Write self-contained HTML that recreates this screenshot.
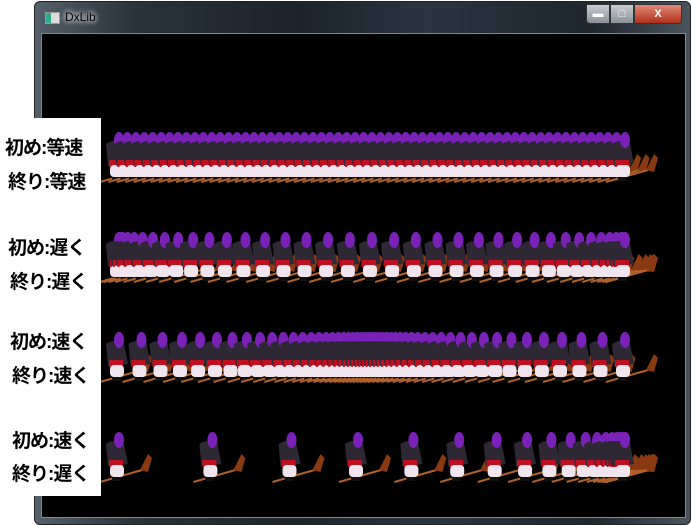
<!DOCTYPE html>
<html><head><meta charset="utf-8"><style>
body{margin:0;width:692px;height:525px;background:#fff;position:relative;overflow:hidden;font-family:"Liberation Sans","Noto Sans CJK JP",sans-serif}
#win{position:absolute;left:34px;top:1px;width:655px;height:522px;border-radius:6px;background:linear-gradient(90deg,#55606a,#2a323a 15%,#1c232b 40%,#2b3540 60%,#1e262e 85%,#4a545e);border:1px solid #222}
#title{position:absolute;left:30px;top:8px;font-size:12px;color:#000;text-shadow:0 0 6px #fff,0 0 6px #fff}
#ico{position:absolute;left:10px;top:10px;width:13px;height:10px;background:linear-gradient(90deg,#3a8 40%,#ddd 40%);border:1px solid #999}
#client{position:absolute;left:6px;top:31px;width:643px;height:483px;background:#000;border:1px solid #888}
.btn{position:absolute;top:2px;height:18px;border:1px solid #333;background:linear-gradient(#c8ccd2,#8a9098);color:#fff;font-size:11px;text-align:center;line-height:18px;font-weight:bold}
#panel{position:absolute;left:0;top:118px;width:101px;height:378px;background:#fff}
.t{position:absolute;font-size:19px;font-weight:bold;color:#000;white-space:nowrap;letter-spacing:-1px}
svg{position:absolute;left:0;top:0}
</style></head><body>
<div id="win">
<div id="ico"></div><div id="title">DxLib</div>
<div class="btn" style="left:551px;width:22px;border-radius:0 0 0 4px">▬</div>
<div class="btn" style="left:575px;width:22px">□</div>
<div class="btn" style="left:599px;width:46px;background:linear-gradient(#e08a78,#b03018);border-radius:0 0 4px 0">X</div>
<div id="client"></div>
</div>
<svg id="s" width="692" height="525">
<defs><g id="sp">
<line x1="-2" y1="52" x2="40" y2="40" stroke="#b0602a" stroke-width="2"/>
<path d="M38 40 l8 -16 l4 4 l-4 14 z" fill="#8a3a10"/>
<path d="M4 14 q8 -6 18 0 l4 20 l-20 2 z" fill="#2e2834"/>
<ellipse cx="17" cy="10" rx="5" ry="8" fill="#7a22b8"/>
<rect x="7" y="30" width="14" height="7" fill="#c01020"/>
<rect x="8" y="35" width="14" height="12" rx="4" fill="#f0e4ee"/>
<rect x="10" y="47" width="9" height="4" fill="#111"/>
</g></defs><g id="g"></g></svg>
<div id="panel">
<div class="t" style="left:5px;top:15px">初め:等速</div>
<div class="t" style="left:8px;top:49px">終り:等速</div>
<div class="t" style="left:8px;top:115px">初め:遅く</div>
<div class="t" style="left:10px;top:149px">終り:遅く</div>
<div class="t" style="left:10px;top:209px">初め:速く</div>
<div class="t" style="left:12px;top:243px">終り:速く</div>
<div class="t" style="left:12px;top:308px">初め:速く</div>
<div class="t" style="left:12px;top:341px">終り:遅く</div>
</div>
<script>
var g=document.getElementById('g'),h='';
function r3(t){var u=2*t-1;return 0.5+0.5*(0.35*u+0.65*u*u*u);}
var f=[function(t){return t},function(t){return (1-Math.cos(Math.PI*t))/2},r3,
function(t){return 1-Math.pow(1-t,5)}];
var ns=[60,36,50,25];
var ys=[130,230,330,430];
for(var r=0;r<4;r++){var n=ns[r];for(var i=0;i<=n;i++){var x=102+506*f[r](i/n);h+='<use href="#sp" x="'+x.toFixed(1)+'" y="'+ys[r]+'"/>';}}
g.innerHTML=h;
</script>
</body></html>
